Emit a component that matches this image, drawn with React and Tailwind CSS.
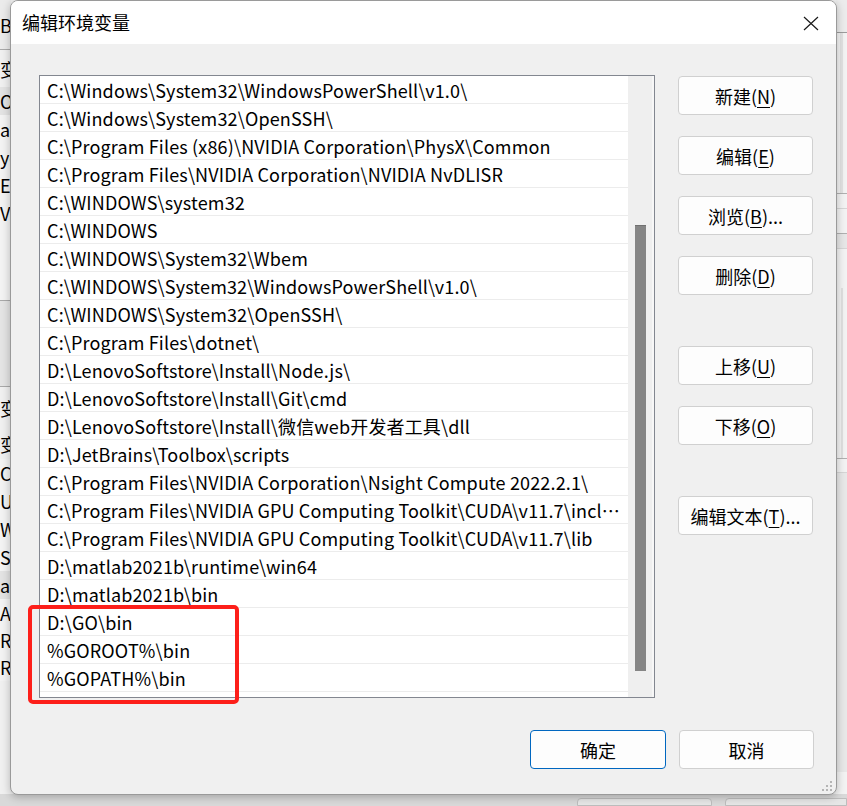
import React from 'react';

const paths = [
  'C:\\Windows\\System32\\WindowsPowerShell\\v1.0\\',
  'C:\\Windows\\System32\\OpenSSH\\',
  'C:\\Program Files (x86)\\NVIDIA Corporation\\PhysX\\Common',
  'C:\\Program Files\\NVIDIA Corporation\\NVIDIA NvDLISR',
  'C:\\WINDOWS\\system32',
  'C:\\WINDOWS',
  'C:\\WINDOWS\\System32\\Wbem',
  'C:\\WINDOWS\\System32\\WindowsPowerShell\\v1.0\\',
  'C:\\WINDOWS\\System32\\OpenSSH\\',
  'C:\\Program Files\\dotnet\\',
  'D:\\LenovoSoftstore\\Install\\Node.js\\',
  'D:\\LenovoSoftstore\\Install\\Git\\cmd',
  'D:\\LenovoSoftstore\\Install\\微信web开发者工具\\dll',
  'D:\\JetBrains\\Toolbox\\scripts',
  'C:\\Program Files\\NVIDIA Corporation\\Nsight Compute 2022.2.1\\',
  'C:\\Program Files\\NVIDIA GPU Computing Toolkit\\CUDA\\v11.7\\include',
  'C:\\Program Files\\NVIDIA GPU Computing Toolkit\\CUDA\\v11.7\\lib',
  'D:\\matlab2021b\\runtime\\win64',
  'D:\\matlab2021b\\bin',
  'D:\\GO\\bin',
  '%GOROOT%\\bin',
  '%GOPATH%\\bin',
];

// bits of the window behind the dialog, peeking out on the left
const leftRows = [
  { t: 'Ba', h: 'h-[49px]', bg: 'bg-[#ebebeb]' },
  { t: '变量', h: 'h-[38px]', bg: 'bg-[#f0f0f0]', border: true },
  { t: 'On', h: 'h-[28px]', bg: 'bg-[#e3e3e3]' },
  { t: 'at', h: 'h-[28px]', bg: 'bg-[#f3f3f3]' },
  { t: 'yo', h: 'h-[28px]', bg: 'bg-[#f3f3f3]' },
  { t: 'EI', h: 'h-[28px]', bg: 'bg-[#f3f3f3]' },
  { t: 'V', h: 'h-[28px]', bg: 'bg-[#f3f3f3]' },
  { t: '', h: 'h-[73px]', bg: 'bg-[#f3f3f3]' },
  { t: '', h: 'h-[86px]', bg: 'bg-[#e4e4e4]', border: true },
  { t: '变', h: 'h-[43px]', bg: 'bg-[#f0f0f0]', border: true },
  { t: '变', h: 'h-[30px]', bg: 'bg-[#f0f0f0]' },
  { t: 'C', h: 'h-[28px]', bg: 'bg-[#f3f3f3]' },
  { t: 'U', h: 'h-[28px]', bg: 'bg-[#f3f3f3]' },
  { t: 'W', h: 'h-[28px]', bg: 'bg-[#f3f3f3]' },
  { t: 'S', h: 'h-[28px]', bg: 'bg-[#f3f3f3]' },
  { t: 'at', h: 'h-[28px]', bg: 'bg-[#e3e3e3]' },
  { t: 'A', h: 'h-[27px]', bg: 'bg-[#f3f3f3]' },
  { t: 'R', h: 'h-[27px]', bg: 'bg-[#f3f3f3]' },
  { t: 'R', h: 'h-[28px]', bg: 'bg-[#f3f3f3]' },
];

const Button = ({ children, primary, className = '' }) => (
  <button
    className={`flex h-[39px] w-[135px] items-center justify-center rounded-[4px] border bg-[#fdfdfd] text-[18px] leading-none text-black ${
      primary ? 'border-[#0067c0]' : 'border-[#d0d0d0]'
    } ${className}`}
  >
    {children}
  </button>
);

const Key = ({ children }) => <span className="underline underline-offset-[3px]">{children}</span>;

export default function App() {
  return (
    <div
      className="relative h-[806px] w-[847px] overflow-hidden bg-[#f0f0f0] text-black"
      style={{ fontFamily: '"Noto Sans CJK SC", "Noto Sans", sans-serif' }}
    >
      {/* Background window */}
      <div className="absolute inset-0 flex flex-col">
        <div className="flex flex-1">
          <div className="w-[11px] overflow-hidden">
            {leftRows.map((r, i) => (
              <div
                key={i}
                className={`${r.h} ${r.bg} ${r.border ? 'border-t border-[#a9a9a9]' : ''} flex items-center whitespace-nowrap text-[18px] leading-none`}
              >
                {r.t}
              </div>
            ))}
          </div>
          <div className="flex-1" />
          <div className="flex w-[11px] flex-col bg-[#f3f3f3]">
            <div className="h-[33px] border-b border-[#9c9c9c] bg-[#ececec]" />
            <div className="ml-[4px] h-[160px] w-[3px] bg-[#e2e2e2]" />
            <div className="h-[15px] border-t border-[#b0b0b0]" />
            <div className="h-[25px] border-t border-[#d6d6d6]" />
            <div className="h-[15px] border-t border-[#b0b0b0] bg-[#e7e7e7]" />
            <div className="h-[40px] border-t border-[#d6d6d6]" />
            <div className="ml-[5px] h-[170px] w-[2px] bg-[#e0e0e0]" />
            <div className="h-[14px] border-t border-[#b0b0b0]" />
            <div className="h-[300px] border-t border-[#d6d6d6] bg-[#e8e8e8]" />
          </div>
        </div>
        <div className="flex h-[12px] gap-[13px] bg-[#d9d9d9] pl-[577px]">
          <div className="mt-[4px] w-[135px] rounded-t-[4px] border border-[#bdbdbd] bg-[#e6e6e6]" />
          <div className="mt-[4px] flex-1 rounded-tl-[4px] border border-[#bdbdbd] bg-[#e6e6e6]" />
        </div>
      </div>

      {/* Dialog */}
      <div className="absolute left-[10px] top-0 flex h-[795px] w-[827px] flex-col overflow-hidden rounded-[8px] border border-[#9a9a9a] bg-[#f0f0f0] shadow-[0_2px_8px_rgba(0,0,0,0.25)]">
        <div className="flex h-[43px] items-center justify-between bg-white pl-[11px] pr-[17px]">
          <span className="-mt-[2px] text-[18px] leading-none">编辑环境变量</span>
          <svg width="16" height="15" viewBox="0 0 16 15" className="mt-[1px]">
            <path d="M1 1 L15 14 M15 1 L1 14" stroke="#1b1b1b" strokeWidth="1.2" fill="none" />
          </svg>
        </div>

        <div className="flex gap-[23px] pl-[28px] pt-[31px]">
          <div className="flex h-[623px] w-[616px] border border-[#838790] bg-white">
            <div className="w-[588px]">
              {paths.map((p) => (
                <div
                  key={p}
                  className="h-[28px] border-b border-[#ececec] pl-[7px] pr-[2px] text-[18px] leading-[28px] tracking-[0.15px]"
                >
                  <div className="truncate">{p}</div>
                </div>
              ))}
            </div>
            <div className="flex-1 border-r-2 border-[#f7f7f7] bg-[#efefef]">
              <div className="ml-[7px] mt-[149px] h-[446px] w-[11px] border-t border-[#707070] bg-[#858585]" />
            </div>
          </div>

          <div className="flex flex-col pt-[1px]">
            <Button>
              新建(<Key>N</Key>)
            </Button>
            <Button className="mt-[21px]">
              编辑(<Key>E</Key>)
            </Button>
            <Button className="mt-[21px]">
              浏览(<Key>B</Key>)...
            </Button>
            <Button className="mt-[21px]">
              删除(<Key>D</Key>)
            </Button>
            <Button className="mt-[51px]">
              上移(<Key>U</Key>)
            </Button>
            <Button className="mt-[21px]">
              下移(<Key>O</Key>)
            </Button>
            <Button className="mt-[51px]">
              编辑文本(<Key>T</Key>)...
            </Button>
          </div>
        </div>

        <div className="mt-[32px] flex justify-end gap-[13px] pr-[22px]">
          <Button primary className="w-[136px]">
            确定
          </Button>
          <Button>取消</Button>
        </div>

        {/* resize grip */}
        <svg width="11" height="11" viewBox="0 0 11 11" className="absolute bottom-[2px] right-[3px]">
          <g fill="#b5b5b5">
            <rect x="8" y="0" width="2" height="2" />
            <rect x="4" y="4" width="2" height="2" />
            <rect x="8" y="4" width="2" height="2" />
            <rect x="0" y="8" width="2" height="2" />
            <rect x="4" y="8" width="2" height="2" />
            <rect x="8" y="8" width="2" height="2" />
          </g>
        </svg>
      </div>

      {/* highlight drawn over the screenshot */}
      <div className="absolute left-[28px] top-[605px] h-[99px] w-[211px] rounded-[5px] border-[4px] border-[#fd1f1a]" />
    </div>
  );
}
